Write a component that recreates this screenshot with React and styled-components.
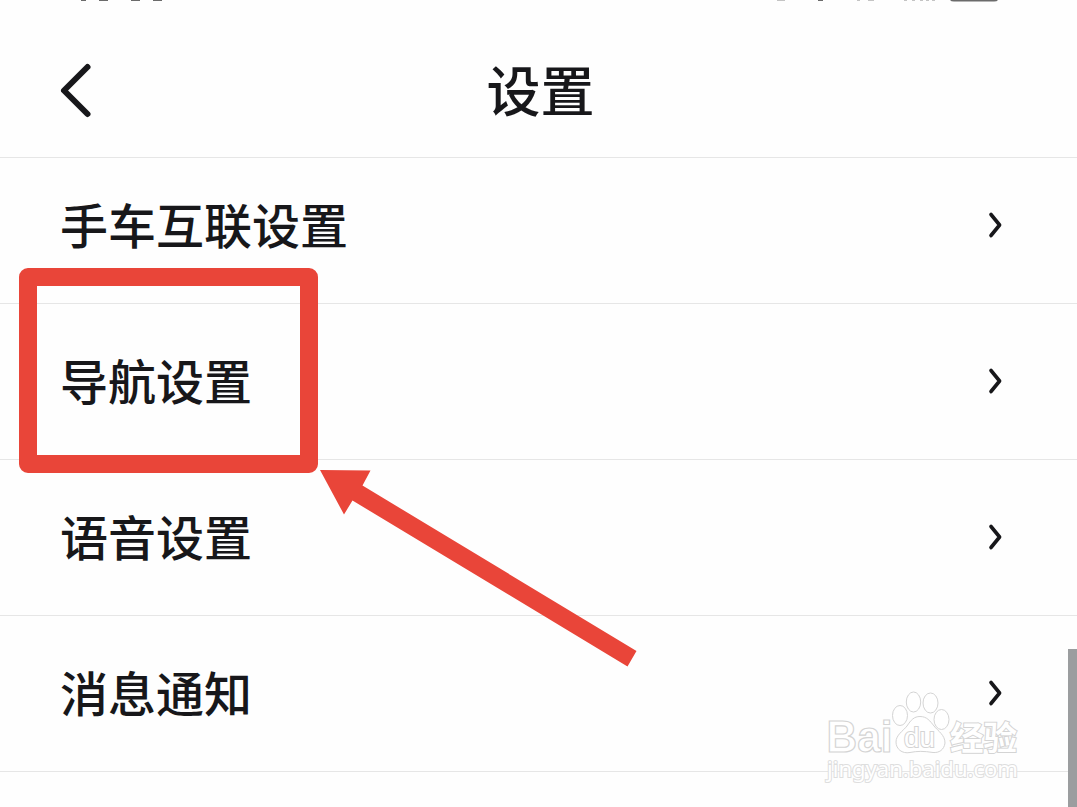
import React from "react";
import styled, { createGlobalStyle } from "styled-components";

const rows = ["手车互联设置", "导航设置", "语音设置", "消息通知"];

function Chevron() {
  return (
    <ChevronIcon width="20" height="30" viewBox="0 0 20 30">
      <path
        d="M6 4.500 L14.600 15 L6 25.500"
        fill="none"
        stroke="#17171a"
        strokeWidth="3.600"
        strokeLinecap="round"
        strokeLinejoin="round"
      />
    </ChevronIcon>
  );
}

function StatusBar() {
  return (
    <Status>
      <svg width="1077" height="4" viewBox="0 0 1077 4">
        <g fill="#6b6b6b">
          <rect x="81" y="0" width="5" height="1" />
          <rect x="99" y="0" width="9" height="1" />
          <rect x="131" y="0" width="9" height="1" />
          <rect x="153" y="0" width="9" height="1" />
          <rect x="818" y="0" width="5" height="1" />
          <path d="M950 0 H998 Q997 1.600 994 1.600 H954 Q951 1.600 950 0 Z" />
        </g>
        <g fill="#c4c4c4">
          <rect x="777" y="0" width="8" height="1" />
          <rect x="857" y="0" width="3" height="1" />
          <rect x="868" y="0" width="6" height="1" />
          <path d="M904 0h3v1h-3z M912 0h3v1h-3z M920 0h3v1h-3z M926 0h3v1h-3z M932 0h3v1h-3z" />
        </g>
      </svg>
    </Status>
  );
}

function Watermark() {
  return (
    <Mark width="210" height="110" viewBox="820 685 210 110">
      <g fill="#fff" stroke="#d4d4d4" strokeWidth="1">
        <ellipse cx="900" cy="715.500" rx="7.500" ry="10" />
        <ellipse cx="913.500" cy="702" rx="7.200" ry="10" />
        <ellipse cx="930.500" cy="703" rx="7.500" ry="10" />
        <ellipse cx="941.500" cy="719.500" rx="7.500" ry="10" />
        <path d="M920 716.500 C927 716.500 930 721 934 726 C938 731 945 735 945 743 C944 750 939 753 933 752.500 C924 751 917 751 910 752.500 C902 754 896 749 896 742 C896 735 903 731 907 726 C911 720 914 716.500 920 716.500 Z" />
      </g>
      <MarkText x="826.500" y="752" textLength="66" size={45}>
        Bai
      </MarkText>
      <MarkText x="904" y="747" textLength="31" size={27} $outer>
        du
      </MarkText>
      <MarkText x="950" y="749.500" textLength="67" size={33} $outer $bold>
        经验
      </MarkText>
      <MarkText x="827" y="777" textLength="191" size={21} $outer $url>
        jingyan.baidu.com
      </MarkText>
    </Mark>
  );
}

export default function App() {
  return (
    <Screen>
      <GlobalStyle />
      <StatusBar />
      <Header>
        <Back width="36" height="60" viewBox="0 0 36 60">
          <path
            d="M31.500 6 L8 29.500 L31.500 53"
            fill="none"
            stroke="#17171a"
            strokeWidth="6"
            strokeLinecap="round"
            strokeLinejoin="round"
          />
        </Back>
        <Title>设置</Title>
      </Header>
      <List>
        {rows.map((label, i) => (
          <Row key={label} $first={i === 0}>
            <Label>{label}</Label>
            <Chevron />
          </Row>
        ))}
      </List>
      <Watermark />
      <Highlight />
      <Arrow width="330" height="210" viewBox="315 462 330 210">
        <path
          d="M320 470 L370.500 470.500 L362.500 485.500 L636.500 651 L627.500 666.500 L352.500 500.500 L344 514.500 Z"
          fill="#e94539"
        />
      </Arrow>
      <ScrollThumb />
    </Screen>
  );
}

const GlobalStyle = createGlobalStyle`
  body {
    margin: 0;
    background: #fefefe;
    overflow: hidden;
  }
`;

const Screen = styled.div`
  position: relative;
  width: 1077px;
  height: 807px;
  overflow: hidden;
  background: #fefefe;
  color: #17171a;
  font-family: "Noto Sans CJK SC", sans-serif;
  font-weight: 500;
`;

const Status = styled.div`
  display: flex;
  align-items: flex-start;
  height: 24px;
`;

const Header = styled.header`
  display: grid;
  grid-template-columns: 100px 1fr 100px;
  align-items: center;
  height: 134px;
  box-sizing: border-box;
  border-bottom: 1px solid #e6e6e6;
`;

const Back = styled.svg`
  margin-left: 56px;
`;

const Title = styled.h1`
  margin: 0;
  padding: 0 0 4px 4px;
  font-size: 54px;
  font-weight: 500;
  line-height: 60px;
  text-align: center;
`;

const List = styled.div`
  display: flex;
  flex-direction: column;
`;

const Row = styled.div`
  display: flex;
  align-items: center;
  justify-content: space-between;
  box-sizing: border-box;
  height: ${(props) => (props.$first ? "146px" : "156px")};
  padding: 0 72px ${(props) => (props.$first ? "10px" : "0")} 60px;
  border-bottom: 1px solid #e6e6e6;
`;

const Label = styled.span`
  padding-bottom: 6px;
  font-size: 48px;
  line-height: 60px;
`;

const ChevronIcon = styled.svg`
  margin-bottom: 2px;
`;

const Highlight = styled.div`
  position: absolute;
  left: 19px;
  top: 268px;
  box-sizing: border-box;
  width: 299px;
  height: 205px;
  border: 18px solid #e94539;
  border-radius: 9px;
`;

const Arrow = styled.svg`
  position: absolute;
  left: 315px;
  top: 462px;
`;

const Mark = styled.svg`
  position: absolute;
  left: 820px;
  top: 685px;
`;

const MarkText = styled.text.attrs({ lengthAdjust: "spacingAndGlyphs" })`
  font-family: ${(props) => (props.$url ? '"Noto Sans"' : '"Liberation Sans"')},
    "Noto Sans CJK SC", sans-serif;
  font-size: ${(props) => props.size}px;
  font-weight: ${(props) => (props.$outer && !props.$bold ? 400 : 700)};
  fill: #fff;
  stroke: ${(props) => (props.$url ? "#dedede" : "#d4d4d4")};
  stroke-width: ${(props) => (props.$outer ? 2 : 1.2)}px;
  paint-order: ${(props) => (props.$outer ? "stroke" : "normal")};
`;

const ScrollThumb = styled.div`
  position: absolute;
  right: 0;
  bottom: 0;
  width: 9px;
  height: 158px;
  background: #9b9d9f;
`;
